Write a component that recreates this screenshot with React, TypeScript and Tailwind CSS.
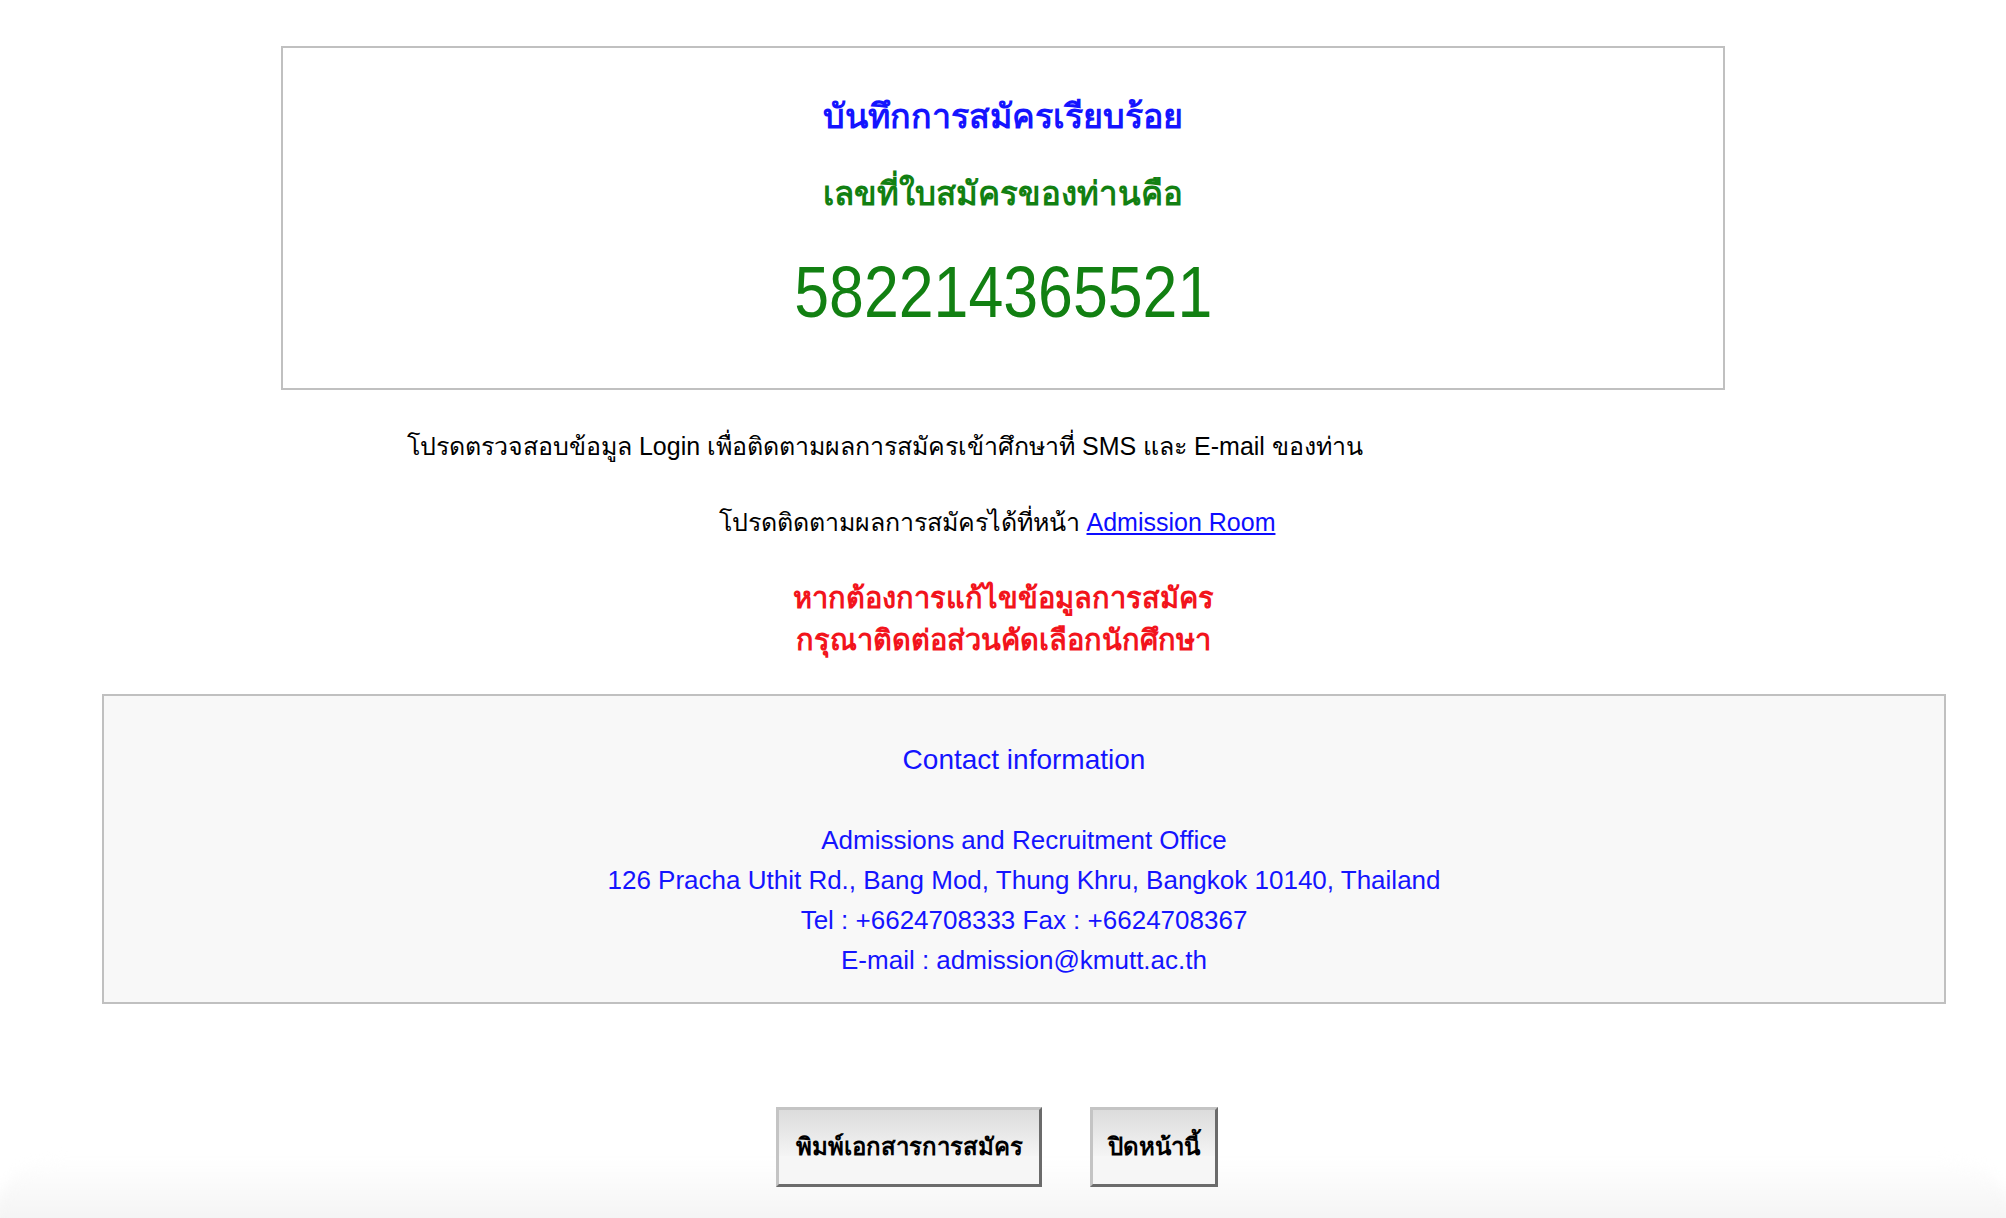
import React from "react";

export default function App() {
  return (
    <div className="relative min-h-[1218px] w-full overflow-hidden bg-white font-['Liberation_Sans',sans-serif]">
      <div className="pointer-events-none absolute bottom-[-20px] left-[-10px] right-[-10px] h-[80px] rounded-t-[70px] bg-gradient-to-b from-white to-[#f1f1f1] blur-[6px]" />
      <div className="relative flex flex-col pt-[46px]">
        <div className="mx-auto flex h-[344px] w-[1444px] flex-col items-center border-2 border-[#c0c0c0]">
          <div className="mt-[48px] text-[34px] font-bold leading-[40px] text-[#1414ff]">บันทึกการสมัครเรียบร้อย</div>
          <div className="mt-[38px] text-[33px] font-bold leading-[40px] text-[#128012]">เลขที่ใบสมัครของท่านคือ</div>
          <div className="mt-[38px] inline-block scale-x-[0.87] text-[72px] leading-[80px] text-[#128012]">582214365521</div>
        </div>

        <div className="mt-[38px] pl-[407px] text-[25px] leading-[36px] text-black">
          โปรดตรวจสอบข้อมูล Login เพื่อติดตามผลการสมัครเข้าศึกษาที่ SMS และ E-mail ของท่าน
        </div>
        <div className="mt-[40px] pr-[12px] text-center text-[25px] leading-[36px] text-black">
          โปรดติดตามผลการสมัครได้ที่หน้า{" "}
          <a href="#" className="text-[#0d0dff] underline">Admission Room</a>
        </div>
        <div className="mt-[37px] text-center text-[29px] font-bold leading-[42px] text-[#f2141c]">
          <div>หากต้องการแก้ไขข้อมูลการสมัคร</div>
          <div>กรุณาติดต่อส่วนคัดเลือกนักศึกษา</div>
        </div>

        <div className="ml-[102px] mt-[33px] flex h-[310px] w-[1844px] flex-col items-center border-2 border-[#c0c0c0] bg-[#f8f8f8] text-[26px] leading-[40px] text-[#1414ff]">
          <div className="mt-[44px] text-[28px]">Contact information</div>
          <div className="mt-[40px]">Admissions and Recruitment Office</div>
          <div>126 Pracha Uthit Rd., Bang Mod, Thung Khru, Bangkok 10140, Thailand</div>
          <div>Tel : +6624708333 Fax : +6624708367</div>
          <div>E-mail : admission@kmutt.ac.th</div>
        </div>

        <div className="mt-[103px] flex justify-center gap-[48px] pr-[12px]">
          <button className="h-[80px] w-[266px] border-[3px] border-b-[#6b6b6b] border-l-[#c4c4c4] border-r-[#6b6b6b] border-t-[#c4c4c4] bg-[linear-gradient(to_bottom,#dcdcdc_0%,#f4f4f4_62%,#f6f6f6_62%,#f6f6f6_100%)] text-[24px] font-bold text-black">
            พิมพ์เอกสารการสมัคร
          </button>
          <button className="h-[80px] w-[128px] border-[3px] border-b-[#6b6b6b] border-l-[#c4c4c4] border-r-[#6b6b6b] border-t-[#c4c4c4] bg-[linear-gradient(to_bottom,#dcdcdc_0%,#f4f4f4_62%,#f6f6f6_62%,#f6f6f6_100%)] text-[24px] font-bold text-black">
            ปิดหน้านี้
          </button>
        </div>
      </div>
    </div>
  );
}
